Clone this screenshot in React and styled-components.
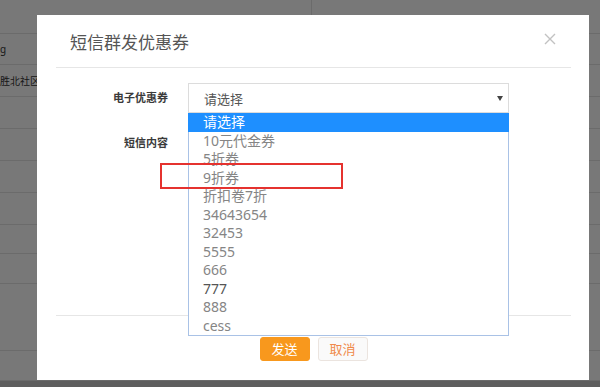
import React from "react";
import styled, { createGlobalStyle } from "styled-components";

const GlobalStyle = createGlobalStyle`
  html, body {
    margin: 0;
    padding: 0;
  }
  body {
    width: 600px;
    height: 387px;
    overflow: hidden;
    background: #fff;
    font-family: "Noto Sans", "Noto Sans CJK SC", sans-serif;
  }
`;

const Page = styled.div`
  position: relative;
  width: 600px;
  height: 387px;
  overflow: hidden;
  display: flex;
  flex-direction: column;
  background: #fff;
`;

const TableRow = styled.div`
  display: flex;
  height: ${(p) => p.$h}px;
  border-bottom: 1px solid #e4e4e4;
  box-sizing: border-box;
  font-size: 10px;
  color: #333;
  font-family: "Noto Sans", "Noto Sans CJK SC", sans-serif;
`;

const NameCell = styled.div`
  width: 312px;
  display: flex;
  align-items: center;
  white-space: nowrap;
  overflow: hidden;
  border-right: 1px solid #e4e4e4;
  box-sizing: border-box;
`;

const PhoneCell = styled.div`
  flex: 1;
  display: flex;
  align-items: center;
  padding: 6px 0 0 10px;
  letter-spacing: 1px;
`;

const PageFooter = styled.div`
  flex: 1;
  background: #c8c8c8;
`;

const Overlay = styled.div`
  position: absolute;
  inset: 0;
  background: rgba(0, 0, 0, 0.53);
`;

const Modal = styled.div`
  position: absolute;
  left: 37px;
  top: 15px;
  width: 552px;
  height: 365px;
  box-sizing: border-box;
  padding: 0 18px 0 19px;
  background: #fff;
  display: flex;
  flex-direction: column;
  font-family: "Noto Sans", "Noto Sans CJK SC", sans-serif;
`;

const Header = styled.div`
  height: 53px;
  box-sizing: border-box;
  display: flex;
  align-items: center;
  justify-content: space-between;
  padding: 0 15px 0 14px;
  border-bottom: 1px solid #e6e6e6;
`;

const Title = styled.h4`
  margin: 0;
  font-size: 17px;
  font-weight: 400;
  color: #555;
`;

const Close = styled.span`
  display: flex;
  margin-top: -5px;
  cursor: pointer;
`;

const Body = styled.div`
  flex: 1;
  padding-top: 15px;
`;

const FormRow = styled.div`
  display: flex;
  align-items: flex-start;
  margin-top: ${(p) => p.$gap || 0}px;
`;

const Label = styled.label`
  width: 112px;
  padding-right: 20px;
  box-sizing: content-box;
  text-align: right;
  font-size: 11px;
  font-weight: 700;
  line-height: 30px;
  color: #3a3a3a;
`;

const SelectWrap = styled.div`
  position: relative;
  width: 321px;
  z-index: 2;
`;

const SelectBox = styled.div`
  height: 30px;
  box-sizing: border-box;
  border: 1px solid #dcdcdc;
  display: flex;
  align-items: center;
  justify-content: space-between;
  padding: 0 5px 0 15px;
  font-size: 13px;
  color: #555;
`;

const Caret = styled.span`
  width: 0;
  height: 0;
  border-left: 3.5px solid transparent;
  border-right: 3.5px solid transparent;
  border-top: 5px solid #444;
`;

const Options = styled.ul`
  position: absolute;
  top: 100%;
  left: 0;
  right: 0;
  margin: 0;
  padding: 0;
  list-style: none;
  background: #fff;
  border: 1px solid #a9c2e6;
  border-top: none;
`;

const Option = styled.li`
  height: 18.5px;
  line-height: 18.5px;
  font-size: 14px;
  color: ${(p) => (p.$active ? "#fff" : p.$dark ? "#555" : "#858585")};
  background: ${(p) => (p.$active ? "#1e8fff" : "transparent")};
  margin: ${(p) => (p.$active ? "0 -1px" : "0")};
  padding-left: ${(p) => (p.$active ? "15px" : "14px")};
`;

const TextArea = styled.div`
  width: 321px;
  height: 150px;
  box-sizing: border-box;
  border: 1px solid #dcdcdc;
`;

const Footer = styled.div`
  height: 65px;
  box-sizing: border-box;
  border-top: 1px solid #e6e6e6;
  display: flex;
  justify-content: center;
  align-items: flex-start;
  gap: 8px;
  padding-top: 21px;
`;

const Button = styled.button`
  width: 50px;
  height: 24px;
  box-sizing: border-box;
  border-radius: 3px;
  font-family: "Noto Sans", "Noto Sans CJK SC", sans-serif;
  font-size: 13px;
  line-height: 1;
  padding: 0;
  cursor: pointer;
  color: ${(p) => (p.$primary ? "#fff" : "#f08a4b")};
  background: ${(p) => (p.$primary ? "#f8981d" : "#fafafa")};
  border: 1px solid ${(p) => (p.$primary ? "#f8981d" : "#ebe4df")};
`;

const Highlight = styled.div`
  position: absolute;
  left: 160px;
  top: 163px;
  width: 183px;
  height: 26px;
  box-sizing: border-box;
  border: 2px solid #e5322f;
  pointer-events: none;
  z-index: 10;
`;

const rows = [
  { h: 34, name: "", phone: "13800138000" },
  { h: 31, name: "g", phone: "" },
  { h: 32, name: "胜北社区", phone: "" },
  { h: 32, name: "", phone: "" },
  { h: 32, name: "", phone: "" },
  { h: 32, name: "", phone: "" },
  { h: 32, name: "", phone: "" },
  { h: 29, name: "", phone: "" },
  { h: 30, name: "", phone: "" },
  { h: 67, name: "", phone: "" },
  { h: 30, name: "", phone: "" },
];

const coupons = [
  "请选择",
  "10元代金券",
  "5折券",
  "9折券",
  "折扣卷7折",
  "34643654",
  "32453",
  "5555",
  "666",
  "777",
  "888",
  "cess",
];

export default function App() {
  return (
    <Page>
      <GlobalStyle />
      {rows.map((r, i) => (
        <TableRow key={i} $h={r.h}>
          <NameCell>{r.name}</NameCell>
          <PhoneCell>{r.phone}</PhoneCell>
        </TableRow>
      ))}
      <PageFooter />
      <Overlay />

      <Modal>
        <Header>
          <Title>短信群发优惠券</Title>
          <Close>
            <svg width="12" height="12" viewBox="0 0 12 12">
              <path d="M1 1L11 11M11 1L1 11" stroke="#c2c2c2" strokeWidth="1.4" />
            </svg>
          </Close>
        </Header>
        <Body>
          <FormRow>
            <Label>电子优惠券</Label>
            <SelectWrap>
              <SelectBox>
                <span>请选择</span>
                <Caret />
              </SelectBox>
              <Options>
                {coupons.map((c, i) => (
                  <Option key={c} $active={i === 0} $dark={c === "777"}>
                    {c}
                  </Option>
                ))}
              </Options>
            </SelectWrap>
          </FormRow>
          <FormRow $gap={15}>
            <Label>短信内容</Label>
            <TextArea />
          </FormRow>
        </Body>
        <Footer>
          <Button $primary>发送</Button>
          <Button>取消</Button>
        </Footer>
      </Modal>
      <Highlight />
    </Page>
  );
}
